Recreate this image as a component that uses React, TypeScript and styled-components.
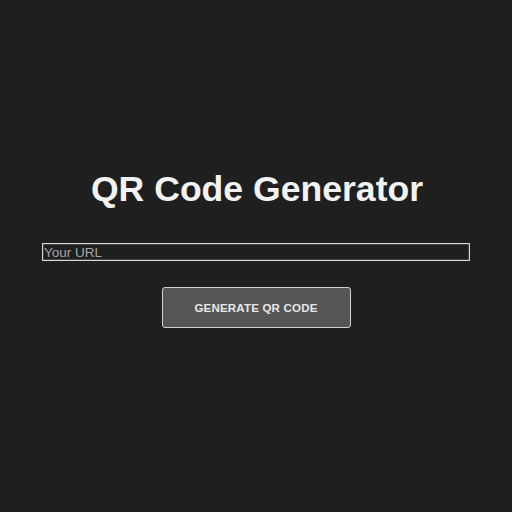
import React from "react";
import styled, { createGlobalStyle } from "styled-components";

const Global = createGlobalStyle`
  html, body { margin: 0; padding: 0; background: #1f1f1f; }
  body { font-family: "Liberation Sans", Arial, sans-serif; }
`;

const Page = styled.div`
  width: 512px;
  height: 512px;
  display: flex;
  flex-direction: column;
  align-items: center;
  box-sizing: border-box;
  padding-top: 169px;
`;

const Title = styled.h1`
  margin: 0 0 34px 0;
  font-size: 35.6px;
  font-weight: 700;
  color: #f2f2f2;
  line-height: 40px;
  transform: translateX(1px);
`;

const UrlInput = styled.input`
  width: 428px;
  height: 18px;
  box-sizing: border-box;
  background: #1f1f1f;
  border: 1px solid #d8d8d8;
  outline: 1px solid #444;
  outline-offset: -2px;
  color: #eee;
  font-family: "Liberation Sans", Arial, sans-serif;
  font-size: 13.5px;
  padding: 0 1px;
  margin: 0 0 26px 0;
  &::placeholder { color: #a6a6a6; }
`;

const Button = styled.button`
  width: 189px;
  height: 41px;
  background: #555555;
  border: 1px solid #d0d0d0;
  border-radius: 3px;
  color: #e8e8e8;
  font-family: "Liberation Sans", Arial, sans-serif;
  font-weight: 700;
  font-size: 11.5px;
  letter-spacing: 0.2px;
  cursor: pointer;
`;

export default function App() {
  return (
    <>
      <Global />
      <Page>
        <Title>QR Code Generator</Title>
        <UrlInput placeholder="Your URL" />
        <Button>GENERATE QR CODE</Button>
      </Page>
    </>
  );
}
